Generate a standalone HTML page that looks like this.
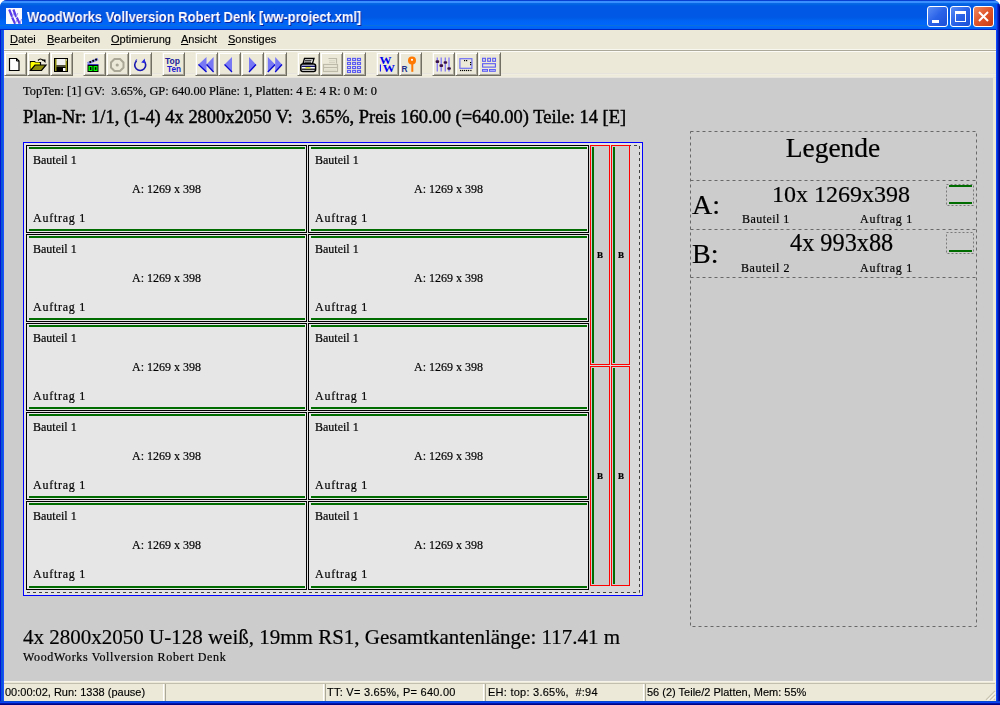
<!DOCTYPE html>
<html><head><meta charset="utf-8">
<style>
*{margin:0;padding:0;box-sizing:border-box}
html,body{width:1000px;height:705px;overflow:hidden;background:#fff}
.s,.t1,.t2,.t3,.st,#menu span,.bl{will-change:transform}
.s,.t1,.t2,.t3,.bl{-webkit-text-stroke:0.2px #000}
.st,#menu span{-webkit-text-stroke:0.15px #000}
body{position:relative;font-family:"Liberation Sans",sans-serif;font-variant-ligatures:none}
.a{position:absolute}
#win{position:absolute;left:0;top:0;width:1000px;height:705px;background:#0048d8;border-radius:7px 7px 0 0;overflow:hidden}
#title{position:absolute;left:0;top:0;width:1000px;height:30px;
 background:linear-gradient(to bottom,#0a40d2 0px,#0a40d2 1px,#3a90ff 1px,#3a8eff 3px,#0a6ae6 3px,#0062e2 5px,#0058e4 6px,#0058e4 17px,#005ee8 19px,#0064f6 21px,#0066fa 25px,#0a70dc 25px,#0a70dc 26px,#0066fa 26px,#0062f2 28.5px,#0030d0 29px,#0020b8 30px)}
#ttext{position:absolute;left:26.5px;top:9px;font:bold 14px "Liberation Sans",sans-serif;color:#fff;text-shadow:1px 1px 0 #0a1e9a;white-space:nowrap;transform:scaleX(0.926);transform-origin:0 0;will-change:transform}
.cap{position:absolute;top:6px;width:21px;height:21px;border:1px solid #fff;border-radius:3px}
#face{position:absolute;left:4px;top:30px;width:992px;height:671px;background:#ece9d8}
.fr{position:absolute}
#menu span{position:absolute;top:33px;font-size:11px;color:#000}
.ml1{position:absolute;left:4px;top:50px;width:992px;height:1px;background:#aca899}
.ml2{position:absolute;left:4px;top:51px;width:992px;height:1px;background:#fcfbf6}
.ml0{position:absolute;left:4px;top:49px;width:992px;height:1px;background:#f8f7f0}
.tb{position:absolute;top:52px;width:23px;height:24px;border-top:1px solid #f1efe2;border-left:1px solid #f1efe2;border-right:1px solid #716f64;border-bottom:1px solid #716f64;box-shadow:inset 1px 1px 0 #fff,inset -1px -1px 0 #aca899}
.tb svg{left:-1px!important;top:-1px!important}
#gray{position:absolute;left:4px;top:78px;width:989px;height:603px;background:#cccccc}
#tbband{position:absolute;left:4px;top:73px;width:992px;height:5px;background:linear-gradient(#e6e3dc 0,#e6e3dc 1px,#f2f0e4 1px,#ebe8d6 3px,#f2f0e4 4px,#dcd8d8 5px)}
.s{font-family:"Liberation Serif",serif;white-space:nowrap;position:absolute;color:#000;line-height:1}
#status{position:absolute;left:4px;top:681px;width:992px;height:20px;background:#ece9d8;border-top:1px solid #f5f3ea}
#status .dl{position:absolute;left:0;top:1px;width:991px;height:1px;background:#c2bfae}
.st{position:absolute;top:4px;font-size:11px;color:#000;white-space:nowrap}
.sep{position:absolute;top:2px;width:3px;height:17px;border-left:1px solid #fff;border-right:1px solid #aca899}
/* plate */
#plate{position:absolute;left:23px;top:142px;width:620px;height:454px;border:1px solid #0000ff;background:#e3e3e3}
#waste{position:absolute;left:588px;top:145px;width:52px;height:448px;background:#d9d9d9}
#dash{position:absolute;left:26px;top:145px;width:614px;height:448px;border:1px dashed #404040}
.part{position:absolute;width:281px;height:88px;border:1px solid #000;background:#e6e6e6}
.gt{position:absolute;left:2px;top:1px;width:276px;height:2px;background:#006c00}
.gb{position:absolute;left:2px;bottom:1px;width:276px;height:2px;background:#006c00}
.t1,.t2,.t3{position:absolute;font-family:"Liberation Serif",serif;font-size:12px;white-space:nowrap;line-height:1;color:#000}
.t1{left:6px;top:8px}
.t2{left:0;width:279px;text-align:center;top:37px}
.t3{left:5.5px;top:66px;letter-spacing:0.75px}
.strip{position:absolute;width:20px;height:220px;border:1px solid #ff0000;background:#cccccc}
.gl{position:absolute;left:1px;top:1px;width:2px;height:216px;background:#006c00}
.bl{position:absolute;left:5.5px;top:105px;font:bold 9px "Liberation Serif",serif;line-height:1}
/* legend */
.lg{position:absolute;border:1px dashed #606060}
</style></head><body>
<div id="win">
 <div id="title"></div>
 <div class="a" style="left:6px;top:8px;width:16px;height:16px;background:#fbfbff;overflow:hidden">
  <svg width="16" height="16"><g stroke="#5a3ce8" stroke-linecap="butt"><path d="M3.2 1.5L6.2 9M7.4 1.5L10.2 9M6.2 9.5L9.2 16M10.8 9.5L13.8 16" stroke-width="2.2"/><path d="M6.2 9L7.6 5M10.2 9L11.8 5M9.2 16L10.8 12M13.8 16L15.6 11" stroke-width="1" stroke="#9a8cf0"/></g></svg>
 </div>
 <div id="ttext">WoodWorks Vollversion Robert Denk [ww-project.xml]</div>
 <div class="cap" style="left:927px;background:linear-gradient(135deg,#5b8ef5,#2a62e8 50%,#1b4fd6)"><div class="a" style="left:4px;top:13px;width:7px;height:3px;background:#fff"></div></div>
 <div class="cap" style="left:950px;background:linear-gradient(135deg,#5b8ef5,#2a62e8 50%,#1b4fd6)"><div class="a" style="left:4px;top:4px;width:11px;height:11px;border:1px solid #fff;border-top-width:3px"></div></div>
 <div class="cap" style="left:973px;background:linear-gradient(135deg,#f08a60,#e0542a 50%,#c83c14)"><svg class="a" style="left:0;top:0" width="19" height="19"><path d="M5 5 L14 14 M14 5 L5 14" stroke="#fff" stroke-width="2"/></svg></div>
 <div id="face"></div>
 <div class="fr" style="left:0;top:30px;width:4px;height:675px;background:linear-gradient(to right,#0014d8 0,#0014d8 1px,#0a56cc 1px,#0a52e6 3px,#1a50ff 3px)"></div>
 <div class="fr" style="left:996px;top:4px;width:4px;height:701px;background:linear-gradient(to right,#1044ff 0,#1044ff 1px,#0030d0 1px,#0030d0 2px,#0018a8 2px,#0018a8 3px,#000090 3px)"></div>
 <div class="fr" style="left:0;top:701px;width:1000px;height:4px;background:linear-gradient(to bottom,#0848d0 0,#0848d0 1px,#0a40f8 1px,#0a40f8 2px,#0018a0 2px,#0018a0 3px,#000088 3px)"></div>
 <div id="menu">
  <span style="left:10px"><u>D</u>atei</span>
  <span style="left:47px"><u>B</u>earbeiten</span>
  <span style="left:111px"><u>O</u>ptimierung</span>
  <span style="left:181px"><u>A</u>nsicht</span>
  <span style="left:228px"><u>S</u>onstiges</span>
 </div>
 <div class="ml0"></div><div class="ml1"></div><div class="ml2"></div>
 <div id="tbband"></div>
<div class="tb" style="left:4px"><svg width="23" height="24" viewBox="0 0 23 24" style="position:absolute;left:0;top:0"><path d="M5.5 6.5h7l2.5 2.5v9.5h-9.5z" fill="#fff" stroke="#000" stroke-width="1.2"/><path d="M12.5 6.5v2.5h2.5" fill="none" stroke="#000" stroke-width="1"/></svg></div>
<div class="tb" style="left:27px"><svg width="23" height="24" viewBox="0 0 23 24" style="position:absolute;left:0;top:0"><path d="M3.5 18.5V9.5h4l1 1h5v3" fill="#ffff00" stroke="#000" stroke-width="1.2"/><path d="M3.5 10.5h9v3h-5l-4 5z" fill="#ffff00"/><path d="M3.5 18.5l4.5-5.5h11l-4.5 5.5z" fill="#8c8c10" stroke="#000" stroke-width="1.2"/><path d="M11 8.5q2.5-3 5 0" fill="none" stroke="#000" stroke-width="1.2"/><path d="M15 7.5h3.5v3.5z" fill="#000"/></svg></div>
<div class="tb" style="left:50px"><svg width="23" height="24" viewBox="0 0 23 24" style="position:absolute;left:0;top:0"><rect x="4" y="6" width="14" height="14" fill="#000"/><rect x="5" y="7" width="12" height="12" fill="#8c8c10"/><rect x="6.5" y="7" width="9" height="6" fill="#f0f0f0"/><rect x="6.5" y="13.5" width="9" height="1" fill="#1a1a70"/><rect x="6.5" y="15" width="9" height="5" fill="#000"/><rect x="13" y="16" width="2.5" height="3" fill="#fff"/><rect x="16" y="7.5" width="1" height="1" fill="#fff"/></svg></div>
<div class="tb" style="left:83px"><svg width="23" height="24" viewBox="0 0 23 24" style="position:absolute;left:0;top:0"><rect x="4.5" y="13" width="11" height="7" fill="#000"/><rect x="5.5" y="14" width="4" height="5" fill="#00ff00"/><rect x="10.5" y="14" width="4" height="5" fill="#00ff00"/><rect x="6.8" y="15" width="1.6" height="3" fill="#000"/><rect x="11.8" y="15.2" width="1.6" height="2.6" fill="#000"/><path d="M4.5 11.5 L15 7" stroke="#8a8ae8" stroke-width="2.6"/><circle cx="7.3" cy="10" r="1.1" fill="#000"/><circle cx="10.2" cy="8.8" r="1.1" fill="#000"/><circle cx="13.1" cy="7.6" r="1.1" fill="#000"/><rect x="4.5" y="12" width="11" height="1" fill="#4040c0"/></svg></div>
<div class="tb" style="left:106px"><svg width="23" height="24" viewBox="0 0 23 24" style="position:absolute;left:0;top:0"><path d="M8.5 7 h5.5 l3.5 3.5 v5 l-3.5 3.5 h-5.5 l-3.5 -3.5 v-5z" fill="none" stroke="#aaa797" stroke-width="2"/><circle cx="11.2" cy="13" r="1.6" fill="#aaa797"/></svg></div>
<div class="tb" style="left:129px"><svg width="23" height="24" viewBox="0 0 23 24" style="position:absolute;left:0;top:0"><path d="M7.6 8.8 A5.5 5.5 0 1 0 14.8 8.8" fill="none" stroke="#1a1ab0" stroke-width="1.6"/><path d="M12.2 10.5 L15.8 6.5 L16.2 11.2 z" fill="#2a2ae0"/><path d="M6.5 9 l1.5 -1.5" stroke="#6060d0" stroke-width="1.2"/></svg></div>
<div class="tb" style="left:162px"><svg width="23" height="24" viewBox="0 0 23 24" style="position:absolute;left:0;top:0"><text x="3" y="11.7" font-family="Liberation Sans" font-weight="bold" font-size="8.4" fill="#22229a" textLength="15" lengthAdjust="spacingAndGlyphs">Top</text><text x="5" y="19.8" font-family="Liberation Sans" font-weight="bold" font-size="8.4" fill="#1c1cd0" textLength="14" lengthAdjust="spacingAndGlyphs">Ten</text></svg></div>
<div class="tb" style="left:195px"><svg width="23" height="24" viewBox="0 0 23 24" style="position:absolute;left:0;top:0"><path d="M3.4 12.5 L11.5 5.0 V20.0 z" fill="#7878f4"/><path d="M3.4 12.5 L11.5 20.0" stroke="#0808d0" stroke-width="1.3"/><path d="M11.5 12.5 L18.6 5.0 V20.0 z" fill="#7878f4"/><path d="M11.5 12.5 L18.6 20.0" stroke="#0808d0" stroke-width="1.3"/></svg></div>
<div class="tb" style="left:218px"><svg width="23" height="24" viewBox="0 0 23 24" style="position:absolute;left:0;top:0"><path d="M6.5 12.5 L14.0 5.0 V20.0 z" fill="#7878f4"/><path d="M6.5 12.5 L14.0 20.0" stroke="#0808d0" stroke-width="1.3"/></svg></div>
<div class="tb" style="left:241px"><svg width="23" height="24" viewBox="0 0 23 24" style="position:absolute;left:0;top:0"><path d="M15.0 12.5 L8.0 5.0 V20.0 z" fill="#7878f4"/><path d="M15.0 12.5 L8.0 20.0" stroke="#0808d0" stroke-width="1.3"/></svg></div>
<div class="tb" style="left:264px"><svg width="23" height="24" viewBox="0 0 23 24" style="position:absolute;left:0;top:0"><path d="M11.2 12.5 L3.8 5.0 V20.0 z" fill="#7878f4"/><path d="M11.2 12.5 L3.8 20.0" stroke="#0808d0" stroke-width="1.3"/><path d="M18.0 12.5 L11.2 5.0 V20.0 z" fill="#7878f4"/><path d="M18.0 12.5 L11.2 20.0" stroke="#0808d0" stroke-width="1.3"/></svg></div>
<div class="tb" style="left:297px"><svg width="23" height="24" viewBox="0 0 23 24" style="position:absolute;left:0;top:0"><path d="M7.5 6.5h9.5l-1.5 5h-9.5z" fill="#fff" stroke="#000" stroke-width="1.3"/><path d="M8 8.7h6.5M7.5 10.2h6.5" stroke="#000" stroke-width="0.9"/><rect x="3.8" y="12" width="14.8" height="7.6" rx="2" fill="#fff" stroke="#000" stroke-width="1.5"/><rect x="4.5" y="13.6" width="13.5" height="1.4" fill="#101060"/><rect x="4.5" y="16.6" width="13.5" height="1.2" fill="#000"/><rect x="8.5" y="15.2" width="5" height="1.2" fill="#d8e000"/></svg></div>
<div class="tb" style="left:320px"><svg width="23" height="24" viewBox="0 0 23 24" style="position:absolute;left:0;top:0"><path d="M8.5 6.5h8v5" fill="none" stroke="#bdbaa9" stroke-width="1.2"/><path d="M9 8.8h6M9 10.5h6" stroke="#d5d2c2" stroke-width="1"/><rect x="3.5" y="12.5" width="14" height="7" fill="none" stroke="#bdbaa9" stroke-width="1.2"/><path d="M4 15.5h13" stroke="#bdbaa9" stroke-width="1.2"/><path d="M5 18h11" stroke="#d5d2c2"/></svg></div>
<div class="tb" style="left:343px"><svg width="23" height="24" viewBox="0 0 23 24" style="position:absolute;left:0;top:0"><rect x="4.5" y="6.4" width="3" height="2" fill="#e8e8ff" stroke="#5a5af0" stroke-width="1.1"/><rect x="9.6" y="6.4" width="3" height="2" fill="#e8e8ff" stroke="#5a5af0" stroke-width="1.1"/><rect x="14.5" y="6.4" width="3" height="2" fill="#e8e8ff" stroke="#5a5af0" stroke-width="1.1"/><rect x="4.5" y="10.4" width="3" height="2" fill="#e8e8ff" stroke="#5a5af0" stroke-width="1.1"/><rect x="9.6" y="10.4" width="3" height="2" fill="#e8e8ff" stroke="#5a5af0" stroke-width="1.1"/><rect x="14.5" y="10.4" width="3" height="2" fill="#e8e8ff" stroke="#5a5af0" stroke-width="1.1"/><rect x="4.5" y="14.5" width="3" height="2" fill="#e8e8ff" stroke="#5a5af0" stroke-width="1.1"/><rect x="9.6" y="14.5" width="3" height="2" fill="#e8e8ff" stroke="#5a5af0" stroke-width="1.1"/><rect x="14.5" y="14.5" width="3" height="2" fill="#e8e8ff" stroke="#5a5af0" stroke-width="1.1"/><rect x="4.5" y="18.4" width="3" height="2" fill="#e8e8ff" stroke="#5a5af0" stroke-width="1.1"/><rect x="9.6" y="18.4" width="3" height="2" fill="#e8e8ff" stroke="#5a5af0" stroke-width="1.1"/><rect x="14.5" y="18.4" width="3" height="2" fill="#e8e8ff" stroke="#5a5af0" stroke-width="1.1"/></svg></div>
<div class="tb" style="left:376px"><svg width="23" height="24" viewBox="0 0 23 24" style="position:absolute;left:0;top:0"><text x="3.4" y="11.6" font-family="Liberation Serif" font-weight="bold" font-size="10" fill="#0000f0" textLength="12" lengthAdjust="spacingAndGlyphs">W</text><text x="6.8" y="19.9" font-family="Liberation Serif" font-weight="bold" font-size="10" fill="#0000f0" textLength="12.2" lengthAdjust="spacingAndGlyphs">W</text><path d="M4.4 12.5V19.5" stroke="#0000f0" stroke-width="1"/></svg></div>
<div class="tb" style="left:399px"><svg width="23" height="24" viewBox="0 0 23 24" style="position:absolute;left:0;top:0"><path d="M9 8.6 a4 4 0 0 1 8 0 a4 4 0 0 1 -8 0z" fill="#ff7800"/><circle cx="13" cy="7.8" r="1.1" fill="#fff"/><rect x="12.3" y="11" width="2" height="8.8" fill="#ff7800"/><text x="2.6" y="19.8" font-family="Liberation Sans" font-weight="bold" font-size="8.5" fill="#203090" textLength="6" lengthAdjust="spacingAndGlyphs">R</text></svg></div>
<div class="tb" style="left:432px"><svg width="23" height="24" viewBox="0 0 23 24" style="position:absolute;left:0;top:0"><path d="M5.3 5.5v14M9.2 5.5v14M13.3 5.5v14M17 5.5v14" stroke="#8a80f4" stroke-width="1.4"/><rect x="3.6" y="8.3" width="3.6" height="2.6" rx="1" fill="#3a1048"/><rect x="7.5" y="12.3" width="3.6" height="2.6" rx="1" fill="#3a1048"/><rect x="11.6" y="9.3" width="3.6" height="2.4" rx="1" fill="#3a1048"/><rect x="15.3" y="15.3" width="3.6" height="2.4" rx="1" fill="#3a1048"/></svg></div>
<div class="tb" style="left:455px"><svg width="23" height="24" viewBox="0 0 23 24" style="position:absolute;left:0;top:0"><rect x="4.9" y="6.7" width="12" height="9.6" fill="none" stroke="#7070f4" stroke-width="1.2"/><rect x="5.0" y="17.9" width="1.2" height="1.2" fill="#000"/><rect x="7.0" y="17.9" width="1.2" height="1.2" fill="#000"/><rect x="9.0" y="17.9" width="1.2" height="1.2" fill="#000"/><rect x="11.0" y="17.9" width="1.2" height="1.2" fill="#000"/><rect x="13.0" y="17.9" width="1.2" height="1.2" fill="#000"/><rect x="15.3" y="17.9" width="1.2" height="1.2" fill="#000"/><rect x="9" y="8" width="1.2" height="1.2" fill="#000"/><rect x="11" y="8" width="1.2" height="1.2" fill="#000"/><rect x="15" y="10" width="1.2" height="1.2" fill="#000"/><rect x="15" y="12" width="1.2" height="1.2" fill="#000"/></svg></div>
<div class="tb" style="left:478px"><svg width="23" height="24" viewBox="0 0 23 24" style="position:absolute;left:0;top:0"><rect x="4.6" y="6.3" width="2.8" height="3" fill="none" stroke="#5a5af4" stroke-width="1.1"/><rect x="9.7" y="6.3" width="2.8" height="3" fill="none" stroke="#5a5af4" stroke-width="1.1"/><rect x="14.7" y="6.3" width="2.8" height="3" fill="none" stroke="#5a5af4" stroke-width="1.1"/><rect x="4.6" y="11.7" width="12.8" height="3.4" fill="none" stroke="#5a5af4" stroke-width="1.1"/><rect x="4" y="17" width="6" height="2.8" fill="#5a5af4"/><rect x="11" y="17" width="6.8" height="2.8" fill="#5a5af4"/><path d="M5 18.4h4M12 18.4h5" stroke="#c8c8ff" stroke-width="0.8"/></svg></div>

 <div id="gray"></div>
 <div class="s" style="left:23px;top:85px;font-size:12.4px">TopTen: [1] GV:&nbsp; 3.65%, GP: 640.00 Pläne: 1, Platten: 4 E: 4 R: 0 M: 0</div>
 <div class="s" style="left:23px;top:108px;font-size:18.45px;-webkit-text-stroke:0.45px #000">Plan-Nr: 1/1, (1-4) 4x 2800x2050 V:&nbsp; 3.65%, Preis 160.00 (=640.00) Teile: 14 [E]</div>
 <div id="plate"></div>
 <div id="waste"></div>
<div class="part" style="left:26px;top:145px;height:88px"><div class="gt"></div><div class="gb"></div><div class="t1">Bauteil 1</div><div class="t2">A: 1269 x 398</div><div class="t3">Auftrag 1</div></div>
<div class="part" style="left:308px;top:145px;height:88px"><div class="gt"></div><div class="gb"></div><div class="t1">Bauteil 1</div><div class="t2">A: 1269 x 398</div><div class="t3">Auftrag 1</div></div>
<div class="part" style="left:26px;top:234px;height:88px"><div class="gt"></div><div class="gb"></div><div class="t1">Bauteil 1</div><div class="t2">A: 1269 x 398</div><div class="t3">Auftrag 1</div></div>
<div class="part" style="left:308px;top:234px;height:88px"><div class="gt"></div><div class="gb"></div><div class="t1">Bauteil 1</div><div class="t2">A: 1269 x 398</div><div class="t3">Auftrag 1</div></div>
<div class="part" style="left:26px;top:323px;height:88px"><div class="gt"></div><div class="gb"></div><div class="t1">Bauteil 1</div><div class="t2">A: 1269 x 398</div><div class="t3">Auftrag 1</div></div>
<div class="part" style="left:308px;top:323px;height:88px"><div class="gt"></div><div class="gb"></div><div class="t1">Bauteil 1</div><div class="t2">A: 1269 x 398</div><div class="t3">Auftrag 1</div></div>
<div class="part" style="left:26px;top:412px;height:88px"><div class="gt"></div><div class="gb"></div><div class="t1">Bauteil 1</div><div class="t2">A: 1269 x 398</div><div class="t3">Auftrag 1</div></div>
<div class="part" style="left:308px;top:412px;height:88px"><div class="gt"></div><div class="gb"></div><div class="t1">Bauteil 1</div><div class="t2">A: 1269 x 398</div><div class="t3">Auftrag 1</div></div>
<div class="part" style="left:26px;top:501px;height:89px"><div class="gt"></div><div class="gb"></div><div class="t1">Bauteil 1</div><div class="t2">A: 1269 x 398</div><div class="t3">Auftrag 1</div></div>
<div class="part" style="left:308px;top:501px;height:89px"><div class="gt"></div><div class="gb"></div><div class="t1">Bauteil 1</div><div class="t2">A: 1269 x 398</div><div class="t3">Auftrag 1</div></div>

<div class="strip" style="left:590px;top:145px;width:20px"><div class="gl"></div><div class="bl">B</div></div>
<div class="strip" style="left:590px;top:366px;width:20px"><div class="gl"></div><div class="bl">B</div></div>
<div class="strip" style="left:611px;top:145px;width:19px"><div class="gl"></div><div class="bl">B</div></div>
<div class="strip" style="left:611px;top:366px;width:19px"><div class="gl"></div><div class="bl">B</div></div>

<svg class="a" style="left:0;top:0" width="1000" height="705">
 <g fill="none" stroke="#686868" stroke-width="1" stroke-dasharray="3 3">
  <path d="M690.5 131.5H976.5V626.5H690.5Z"/>
  <path d="M690.5 180.5H976.5M690.5 229.5H976.5M690.5 277.5H976.5"/>
 </g>
 <g fill="none" stroke="#7a7a7a" stroke-width="1" stroke-dasharray="2 2">
  <path d="M946.5 184.5H973.5V205.5H946.5Z"/>
  <path d="M946.5 232.5H973.5V253.5H946.5Z"/>
 </g>
 <g fill="none" stroke="#404040" stroke-width="1" stroke-dasharray="3 3">
  <path d="M27 592.5H639.5V145.5H630"/>
 </g>
</svg>
 <div class="s" style="left:690px;width:287px;text-align:center;top:134px;font-size:27.5px;padding-right:1px">Legende</div>
 <div class="s" style="left:692px;top:191px;font-size:28px">A:</div>
 <div class="s" style="left:772px;top:182px;font-size:24px">10x 1269x398</div>
 <div class="s" style="left:741.5px;top:213px;font-size:12px;letter-spacing:0.45px">Bauteil 1</div>
 <div class="s" style="left:860px;top:213px;font-size:12px;letter-spacing:0.75px">Auftrag 1</div>
 <div class="a" style="left:949px;top:185px;width:23px;height:2px;background:#006c00"></div>
 <div class="a" style="left:949px;top:202px;width:23px;height:2px;background:#006c00"></div>
 <div class="s" style="left:692px;top:240px;font-size:28px">B:</div>
 <div class="s" style="left:790px;top:231px;font-size:24.3px">4x 993x88</div>
 <div class="s" style="left:741px;top:262px;font-size:12px;letter-spacing:0.6px">Bauteil 2</div>
 <div class="s" style="left:860px;top:262px;font-size:12px;letter-spacing:0.75px">Auftrag 1</div>
 <div class="a" style="left:949px;top:250px;width:23px;height:2px;background:#006c00"></div>
 <div class="s" style="left:23px;top:627px;font-size:21px">4x 2800x2050 U-128 weiß, 19mm RS1, Gesamtkantenlänge: 117.41 m</div>
 <div class="s" style="left:23px;top:651px;font-size:12px;letter-spacing:0.65px">WoodWorks Vollversion Robert Denk</div>
 <div id="status"><div class="dl"></div>
  <div class="st" style="left:1px">00:00:02, Run: 1338 (pause)</div>
  <div class="sep" style="left:159px"></div>
  <div class="sep" style="left:319px"></div>
  <div class="st" style="left:323px;letter-spacing:0.25px">TT: V= 3.65%, P= 640.00</div>
  <div class="sep" style="left:479px"></div>
  <div class="st" style="left:483.5px;letter-spacing:0.25px">EH: top: 3.65%,&nbsp; #:94</div>
  <div class="sep" style="left:639px"></div>
  <svg class="a" style="left:979px;top:6px" width="13" height="13"><path d="M12 3L3 12M12 7L7 12M12 11L11 12" stroke="#c8c4b0" stroke-width="1.2"/><path d="M12.8 3.8L3.8 12.8M12.8 7.8L7.8 12.8" stroke="#fff" stroke-width="0.8"/></svg>
  <div class="st" style="left:643px">56 (2) Teile/2 Platten, Mem: 55%</div>
 </div>
</div>
</body></html>
